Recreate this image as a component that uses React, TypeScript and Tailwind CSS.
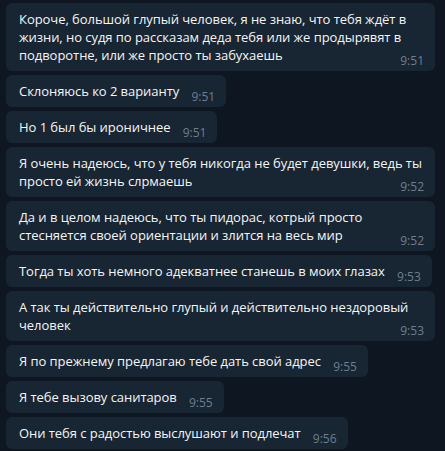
import React from "react";

interface Message {
  lines: string[];
  time: string;
}

const messages: Message[] = [
  {
    lines: [
      "Короче, большой глупый человек, я не знаю, что тебя ждёт в",
      "жизни, но судя по рассказам деда тебя или же продырявят в",
      "подворотне, или же просто ты забухаешь",
    ],
    time: "9:51",
  },
  { lines: ["Склоняюсь ко 2 варианту"], time: "9:51" },
  { lines: ["Но 1 был бы ироничнее"], time: "9:51" },
  {
    lines: [
      "Я очень надеюсь, что у тебя никогда не будет девушки, ведь ты",
      "просто ей жизнь слрмаешь",
    ],
    time: "9:52",
  },
  {
    lines: [
      "Да и в целом надеюсь, что ты пидорас, котрый просто",
      "стесняется своей ориентации и злится на весь мир",
    ],
    time: "9:52",
  },
  { lines: ["Тогда ты хоть немного адекватнее станешь в моих глазах"], time: "9:53" },
  {
    lines: [
      "А так ты действительно глупый и действительно нездоровый",
      "человек",
    ],
    time: "9:53",
  },
  { lines: ["Я по прежнему предлагаю тебе дать свой адрес"], time: "9:55" },
  { lines: ["Я тебе вызову санитаров"], time: "9:55" },
  { lines: ["Они тебя с радостью выслушают и подлечат"], time: "9:56" },
];

const Bubble = ({ message }: { message: Message }) => {
  const multi = message.lines.length > 1;
  return (
    <div
      className={`relative whitespace-nowrap rounded-md bg-[#182533] px-[13px] py-[7px] text-[13px] leading-[18px] tracking-[-0.05px] text-[#f5f5f5] ${
        multi ? "w-[429px]" : "inline-block"
      }`}
    >
      {message.lines.map((line, i) => (
        <div key={i} className={multi ? "" : "inline"}>
          {line}
        </div>
      ))}
      {!multi && <span className="inline-block w-[34px]" />}
      {/* time sits in the bottom right corner */}
      <span className="absolute bottom-[4px] right-[11px] text-[12px] leading-[12px] tracking-normal text-[#6d7f8f]">
        {message.time}
      </span>
    </div>
  );
};

const App = () => {
  return (
    <div
      className="min-h-screen bg-[#0e1621] pl-[6px] pt-[3px]"
      style={{ fontFamily: '"Open Sans", "Noto Sans", sans-serif' }}
    >
      <div className="flex flex-col items-start gap-[4px]">
        {messages.map((m, i) => (
          <Bubble key={i} message={m} />
        ))}
      </div>
    </div>
  );
};

export default App;
